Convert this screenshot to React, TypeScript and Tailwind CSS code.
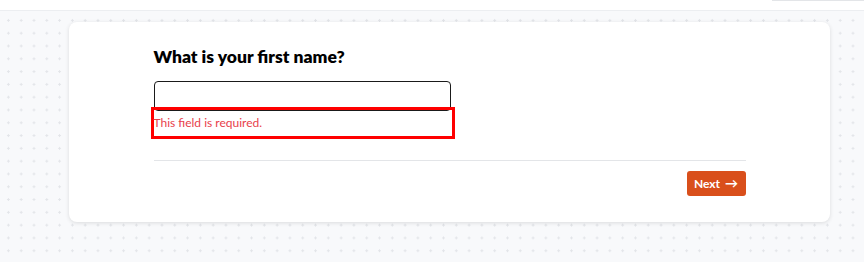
export default function App() {
  return (
    <div className="min-h-screen bg-[#f8f9fb] font-['Lato','Inter',sans-serif] text-black">
      {/* top bar */}
      <div className="flex h-[11px] items-start justify-end border-b border-[#eceef1] bg-white">
        <div className="h-[1px] w-[92px] bg-[#e3e5e8]" />
      </div>

      <div className="bg-[radial-gradient(circle,#e3e5e9_1px,transparent_1.3px)] bg-[size:12.8px_12.8px] bg-[position:2px_3px] pt-[11px] pb-[40px]">
        <div className="ml-[69px] w-[761px] rounded-lg bg-white pt-[21px] pb-[26px] shadow-[0_1px_4px_rgba(0,0,0,0.12)]">
          <div className="mx-auto w-[592px]">
            <h2 className="text-[17.5px] font-extrabold leading-[28px]">
              What is your first name?
            </h2>

            <input
              type="text"
              aria-label="First name"
              className="mt-[10px] block h-[30px] w-[297px] rounded-[4px] border border-[#1a1a1a] px-2 text-sm outline-none"
            />

            <div className="relative -mt-[4px] -ml-[3px] flex h-[32px] w-[304px] items-center border-[3px] border-[#ff0000] text-[12px] text-[#e8414b]">
              This field is required.
            </div>

            <div className="mt-[21px] border-t border-[#e3e5e8]" />

            <div className="mt-[10px] flex justify-end">
              <button className="flex h-[25px] w-[59px] items-center justify-center gap-[5px] rounded-[3px] bg-[#d94f1b] text-[12px] font-bold text-white">
                Next
                <span className="text-[13px] leading-none">→</span>
              </button>
            </div>
          </div>
        </div>
      </div>
    </div>
  )
}
